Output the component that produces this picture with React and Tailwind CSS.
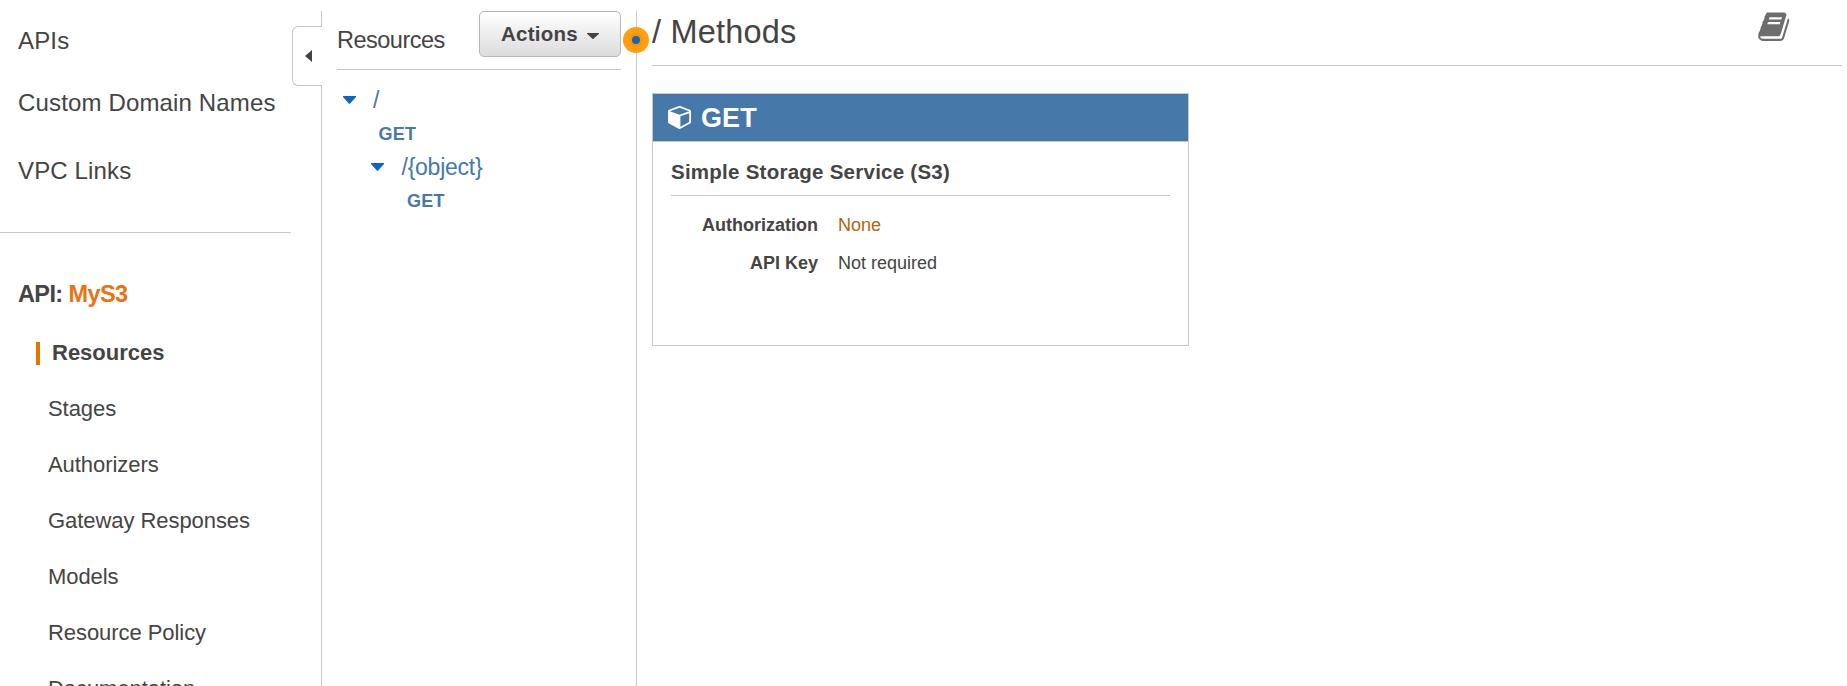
import React from "react";

const API_LINKS = [
  "Stages",
  "Authorizers",
  "Gateway Responses",
  "Models",
  "Resource Policy",
  "Documentation",
];

function Caret({ className }) {
  return (
    <svg className={className} viewBox="0 0 12 7" preserveAspectRatio="none" fill="currentColor" aria-hidden="true">
      <path d="M0 0H12V0.8L6.600 6.600Q6 7.200 5.400 6.600L0 0.8Z" />
    </svg>
  );
}

function CubeIcon({ className }) {
  return (
    <svg className={className} viewBox="0 128 1664 1664" fill="currentColor" aria-hidden="true">
      <path d="M896 1629l640-349v-636l-640 233v752zm-64-865l698-254-698-254-698 254zm832-252v768q0 35-18 65t-49 47l-704 384q-28 16-61 16t-61-16l-704-384q-31-17-49-47t-18-65v-768q0-40 23-73t61-47l704-256q22-8 44-8t44 8l704 256q38 14 61 47t23 73z" />
    </svg>
  );
}

function BookIcon({ className }) {
  return (
    <svg className={className} viewBox="0 0 1792 1792" fill="currentColor" aria-hidden="true">
      <path d="M1703 478q40 57 18 129l-275 906q-19 64-76.500 107.500t-122.500 43.500h-923q-77 0-148.500-53.500t-99.500-131.500q-24-67-2-127 0-4 3-27t4-37q1-8-3-21.500t-3-19.500q2-11 8-21t16.500-23.500 16.500-23.500q23-38 45-91.500t30-91.500q3-10 .5-30t-.5-28q3-11 17-28t17-23q21-36 42-92t25-90q1-9-2.500-32t.5-28q4-13 22-30.500t22-22.500q19-26 42.500-84.500t27.500-96.500q1-8-3-25.500t-2-26.500q2-8 9-18t18-23 17-21q8-12 16.500-30.500t15-35 16-36 19.500-32 26.500-23.500 36-11.500 47.500 5.500l-1 3q38-9 51-9h761q74 0 114 56t18 130l-274 906q-36 119-71.500 153.500t-128.500 34.500h-869q-27 0-38 15-11 16-1 43 24 70 144 70h923q29 0 56-15.500t35-41.500l300-987q7-22 5-57 38 15 59 43zm-1064 2q-4 13 2 22.500t20 9.500h608q13 0 25.500-9.500t16.500-22.500l21-64q4-13-2-22.500t-20-9.500h-608q-13 0-25.500 9.500t-16.500 22.500zm-83 256q-4 13 2 22.500t20 9.500h608q13 0 25.500-9.500t16.500-22.500l21-64q4-13-2-22.500t-20-9.500h-608q-13 0-25.500 9.500t-16.500 22.500z" />
    </svg>
  );
}

function Sidebar() {
  return (
    <nav className="w-[292px] shrink-0 pt-[25px]">
      <div className="pl-[18px] text-[24px] leading-8">
        <div className="tracking-[0.15px]">APIs</div>
        <div className="mt-[30px] whitespace-nowrap tracking-[0.15px]">Custom Domain Names</div>
        <div className="mt-9 tracking-[0.15px]">VPC Links</div>
      </div>
      <div className="mt-[45px] mr-px h-px bg-[#c8c8c8]" />
      <div className="mt-[45px] pl-[18px] text-[23.500px] leading-8 font-bold tracking-[-0.6px]">
        API: <span className="text-[#ec7211]">MyS3</span>
      </div>
      <div className="mt-[14px] pl-9 text-[22px]">
        <div className="flex h-14 items-center font-bold">
          <span className="mt-[3px] mr-3 h-[23px] w-1 bg-[#e07700]" />
          Resources
        </div>
        {API_LINKS.map((label) => (
          <div key={label} className="h-14 pt-px pl-3 leading-[56px] tracking-[-0.06px] whitespace-nowrap">
            {label}
          </div>
        ))}
      </div>
    </nav>
  );
}

function CollapseHandle() {
  return (
    <div className="flex w-[30px] shrink-0 flex-col pt-[11px]">
      <div className="h-[15px] border-r border-[#c8c8c8]" />
      <button className="flex h-[60px] items-center rounded-l-[6px] border border-r-0 border-[#c8c8c8] pl-[12px]">
        <svg className="h-3 w-[7px]" viewBox="0 0 7 12" fill="#444" aria-hidden="true">
          <path d="M7 0V12L0 6Z" />
        </svg>
      </button>
      <div className="flex-1 border-r border-[#c8c8c8]" />
    </div>
  );
}

function ResourceTree() {
  return (
    <section className="w-[314px] shrink-0 px-[15px] pt-[11px]">
      <div className="flex h-[59px] items-start justify-between border-b border-[#c8c8c8]">
        <h2 className="mt-[13px] text-[23.500px] leading-8 tracking-[-0.500px]">Resources</h2>
        <button className="flex h-[46px] w-[142px] items-center rounded-[5px] border border-[#b7b7b7] bg-linear-to-b from-white to-[#dcdcdc] pl-[21px] text-[20.500px] font-bold tracking-[0.25px]">
          Actions
          <Caret className="mt-[3px] ml-[9px] h-[6px] w-3" />
        </button>
      </div>
      <div className="pt-[13px] text-[23px] text-[#4678a9]">
        <div className="flex h-[34px] items-center pl-[6px]">
          <Caret className="h-2 w-[13px] text-[#1166bb]" />
          <span className="ml-[17px]">/</span>
        </div>
        <div className="h-[33px] pl-[41.5px] text-[18px] leading-[35px] font-bold tracking-[0.3px]">GET</div>
        <div className="flex h-[34px] items-center pl-[34px]">
          <Caret className="h-2 w-[13px] text-[#1166bb]" />
          <span className="ml-[17.500px] tracking-[-0.25px]">{"/{object}"}</span>
        </div>
        <div className="h-[33px] pl-[70px] text-[18px] leading-[35px] font-bold tracking-[0.3px]">GET</div>
      </div>
    </section>
  );
}

function SplitDivider() {
  return (
    <div className="relative mt-[11px] w-px shrink-0 bg-[#c8c8c8]">
      <svg className="absolute top-4 -left-[13px] h-[26px] w-[26px]" viewBox="0 0 26 26" aria-hidden="true">
        <circle cx="13" cy="13" r="13" fill="#ff9e0f" />
        <circle cx="13" cy="13" r="6.500" fill="#f7960a" />
        <circle cx="13" cy="13" r="4" fill="#1166bb" />
      </svg>
    </div>
  );
}

function Methods() {
  return (
    <main className="min-w-0 flex-1 pr-[5px] pl-[15px]">
      <header className="flex h-[66px] items-start justify-between border-b border-[#c8c8c8] pr-[52px]">
        <h1 className="mt-3 text-[32.500px] leading-10 tracking-[0.2px]">/ Methods</h1>
        <BookIcon className="mt-[10px] h-[33.5px] w-[33.5px] text-[#6d6d6d]" />
      </header>
      <article className="mt-[27px] h-[253px] w-[537px] border border-[#c8c8c8]">
        <div className="flex h-12 items-center border-b border-[#c8c8c8] bg-[#4678a9] pl-[15px] text-white">
          <CubeIcon className="h-[23px] w-[23px]" />
          <span className="ml-[10px] text-[27px] leading-8 font-bold tracking-[0.1px]">GET</span>
        </div>
        <div className="px-[18px]">
          <h3 className="h-[54px] border-b border-[#c8c8c8] pt-[14px] text-[20.500px] leading-8 font-bold tracking-[0.25px]">
            Simple Storage Service (S3)
          </h3>
          <dl className="grid grid-cols-[147px_1fr] gap-x-5 pt-[10px] text-[18px] leading-[38px]">
            <dt className="text-right font-bold">Authorization</dt>
            <dd className="text-[#b4630a]">None</dd>
            <dt className="text-right font-bold">API Key</dt>
            <dd>Not required</dd>
          </dl>
        </div>
      </article>
    </main>
  );
}

export default function App() {
  return (
    <div className="flex h-[686px] w-full overflow-hidden bg-white font-['Liberation_Sans',Arial,sans-serif] text-[#444]">
      <Sidebar />
      <CollapseHandle />
      <ResourceTree />
      <SplitDivider />
      <Methods />
    </div>
  );
}
